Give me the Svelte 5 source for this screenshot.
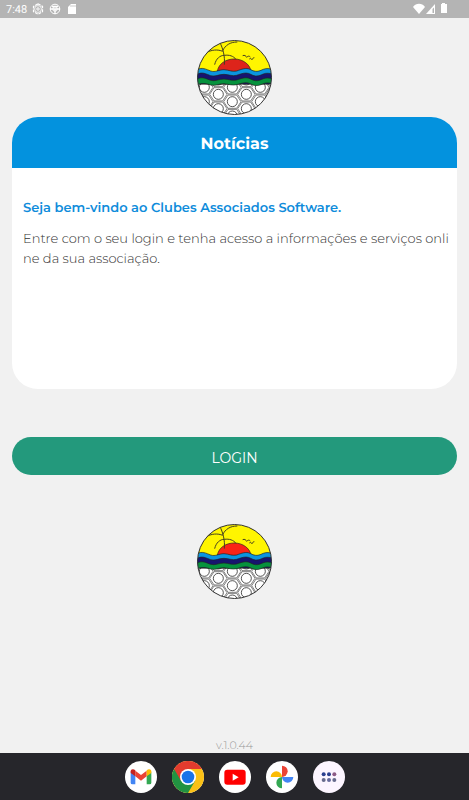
<script>
  const news = {
    title: 'Seja bem-vindo ao Clubes Associados Software.',
    text: 'Entre com o seu login e tenha acesso a informações e serviços online da sua associação.',
  }
  const version = 'v.1.0.44'

  // honeycomb in the lower half of the club logo
  const cells = []
  for (let col = 0; col < 7; col++) {
    for (let row = 0; row < 4; row++) {
      cells.push({ x: 1 + col * 42, y: 117 + row * 43 + (col % 2 ? 0 : 21) })
    }
  }

  const hex = (x, y, rx, ry) =>
    [0, 1, 2, 3, 4, 5]
      .map((i) => {
        const a = (i * Math.PI) / 3
        return `${(x + rx * Math.cos(a)).toFixed(1)},${(y + ry * Math.sin(a)).toFixed(1)}`
      })
      .join(' ')

  const dots = [
    { x: 32, y: 40, color: '#2b3f8f' },
    { x: 48, y: 40, color: '#2b3f8f' },
    { x: 64, y: 40, color: '#8d5a86' },
    { x: 32, y: 57, color: '#666a8c' },
    { x: 48, y: 57, color: '#666a9c' },
    { x: 64, y: 57, color: '#666a8c' },
  ]
</script>

{#snippet logo(id, sun)}
  <svg class="logo" viewBox="21 18 225 225" role="img" aria-label="Clubes Associados">
    <clipPath {id}><circle cx="133.5" cy="130.5" r="111" /></clipPath>
    <g clip-path="url(#{id})" stroke="#222" stroke-width="2">
      <rect x="20" y="17" width="228" height="228" fill="#fff" />
      {#each cells as cell}
        <polygon points={hex(cell.x, cell.y, 26, 23)} fill="#fff" stroke="#444" />
        <circle cx={cell.x} cy={cell.y} r="15" fill="#fff" stroke="#333" stroke-width="2.5" />
      {/each}
      <rect x="20" y="17" width="228" height="100" fill="#fff500" stroke="none" />
      <path d="M82 112C86 88 108 75 133 75S180 90 184 114Z" fill={sun} />
      <g fill="none" stroke="#444022" stroke-width="3">
        <path d="M103 92C105 68 100 45 88 22" />
        <path d="M98 52C84 46 64 46 46 58" />
        <path d="M98 50C106 34 120 24 142 24" />
        <path d="M74 92C78 74 90 64 103 64C118 62 130 66 138 76" />
        <path d="M158 65C164 62 168 66 170 70C174 65 178 66 181 69M178 75C182 72 184 74 186 77C188 73 190 71 193 71" />
      </g>
      <path
        d="M20 108C36 98 48 106 62 111C76 116 86 107 102 107C118 108 126 114 140 111C154 106 168 100 180 106C198 116 206 112 220 106C230 102 238 104 248 106V150H20Z"
        fill="#0b95df"
      />
      <path
        d="M20 122C36 112 48 120 62 125C76 129 86 121 102 121C118 122 126 127 140 124C154 119 168 114 180 120C198 130 206 126 220 120C230 116 238 118 248 120V150H20Z"
        fill="#17146f"
      />
      <path
        d="M20 136C36 126 48 134 62 139C76 143 86 135 102 135C118 136 126 141 140 138C154 133 168 128 180 134C198 144 206 140 220 134C230 130 238 132 248 134V149C238 147 230 145 220 149C206 155 198 158 180 149C168 143 154 148 140 152C126 155 118 151 102 149C86 149 76 157 62 153C48 148 36 146 20 153Z"
        fill="#06923d"
      />
    </g>
    <circle cx="133.5" cy="130.5" r="111" fill="none" stroke="#333" stroke-width="3" />
  </svg>
{/snippet}

<div class="screen">
  <header class="status">
    <span>7:48</span>
    <svg viewBox="0 0 12 12" fill="none" stroke="#fff">
      <path d="M6 .8L10.5 3.4V8.6L6 11.2L1.5 8.6V3.4Z" stroke-width="1.2" stroke-dasharray="3 1" />
      <circle cx="6" cy="6" r="3.4" stroke-width=".8" />
      <circle cx="6" cy="6" r="1.2" />
    </svg>
    <svg viewBox="0 0 12 12" fill="none" stroke="#fff">
      <circle cx="6" cy="6" r="4.8" />
      <path d="M1 6H11M6 6V11M3 3.5H9" stroke-width="1.3" />
      <circle cx="6" cy="6" r="2.2" />
    </svg>
    <svg viewBox="0 0 12 12">
      <path d="M5 1H10V11H2V4Z" fill="#fff" />
      <path d="M5 2V4M7 2V4M9 2V4" stroke="#b4b4b4" stroke-width=".7" />
    </svg>
    <svg class="system" viewBox="0 0 36 12" fill="#fff">
      <path d="M0 4C3-.2 9-.2 12 4L6 11Z" />
      <path d="M22 1V11H13Z" />
      <path d="M19.5 6V10H21V4.5Z" fill="#b4b4b4" />
      <path d="M28 1H29V0H32V1H34V10H28Z" />
    </svg>
  </header>

  <main>
    {@render logo('logo-top', '#dd241b')}

    <section class="card">
      <h1>Notícias</h1>
      <div class="body">
        <h2>{news.title}</h2>
        <p>{news.text}</p>
      </div>
    </section>

    <button class="login" type="button">LOGIN</button>

    {@render logo('logo-bottom', '#fb2416')}

    <p class="version">{version}</p>
  </main>

  <nav class="dock">
    <button type="button" aria-label="Gmail">
      <svg viewBox="0 0 96 96">
        <path d="M17 34V65Q17 70 22 70H31V42Z" fill="#4285f4" />
        <path d="M65 42V70H74Q79 70 79 65V34Z" fill="#34a853" />
        <path d="M31 29L48 42L65 29V46L48 59L31 46Z" fill="#ea4335" />
        <path d="M17 34V31C17 24 25 22 31 28V46L17 36Z" fill="#c5221f" />
        <path d="M79 34V31C79 24 71 22 65 28V46L79 36Z" fill="#fbbc04" />
      </svg>
    </button>
    <button type="button" aria-label="Chrome">
      <svg viewBox="0 0 96 96">
        <circle cx="48" cy="48" r="48" fill="#fbc116" />
        <path d="M48 48L6.4 24A48 48 0 0 0 48 96L69 60Z" fill="#229342" />
        <path d="M6.4 24A48 48 0 0 1 89.6 24H48L27.2 60Z" fill="#e33b2e" />
        <circle cx="48" cy="48" r="24" fill="#fff" />
        <circle cx="48" cy="48" r="19" fill="#1a73e8" />
      </svg>
    </button>
    <button type="button" aria-label="YouTube">
      <svg viewBox="0 0 96 96">
        <rect x="16" y="26" width="64" height="45" rx="9" fill="#f00" />
        <path d="M41 38V59L59 48.500Z" fill="#fff" />
      </svg>
    </button>
    <button type="button" aria-label="Fotos">
      <svg viewBox="0 0 96 96">
        <path d="M48 48V14A17 17 0 0 1 48 48Z" fill="#ea4335" />
        <path d="M48 48H14A17 17 0 0 1 48 48Z" fill="#fbbc04" />
        <path d="M48 48V82A17 17 0 0 1 48 48Z" fill="#34a853" />
        <path d="M48 48H82A17 17 0 0 1 48 48Z" fill="#4285f4" />
      </svg>
    </button>
    <button class="apps" type="button" aria-label="Aplicativos">
      <svg viewBox="0 0 96 96">
        {#each dots as dot}
          <circle cx={dot.x} cy={dot.y} r="6" fill={dot.color} />
        {/each}
      </svg>
    </button>
  </nav>
</div>

<style>
  :global(body) {
    margin: 0;
    background: #f1f1f1;
  }

  .screen {
    display: flex;
    flex-direction: column;
    min-height: 100vh;
    font-family: Montserrat, Inter, sans-serif;
    text-rendering: geometricPrecision;
  }

  .status {
    display: flex;
    align-items: center;
    gap: 5px;
    height: 18px;
    padding: 0 20px 0 6px;
    background: #b4b4b4;
    color: #fff;
    font-family: Roboto, sans-serif;
    font-size: 11px;
  }

  .status svg {
    width: 12px;
    height: 12px;
  }

  .status .system {
    width: 36px;
    margin-left: auto;
  }

  main {
    display: flex;
    flex: 1;
    flex-direction: column;
    align-items: center;
    padding: 22px 12px 0;
  }

  .logo {
    display: block;
    width: 75px;
    height: 75px;
  }

  .card {
    align-self: stretch;
    min-height: 272px;
    margin: 2px 0 48px;
    border-radius: 26px;
    overflow: hidden;
    background: #fff;
  }

  h1 {
    margin: 0;
    padding: 4px 0 0;
    background: #0392de;
    color: #fff;
    font-size: 16px;
    font-weight: 700;
    line-height: 47px;
    text-align: center;
  }

  .body {
    padding: 30px 7px 30px 11px;
  }

  h2 {
    margin: 0 0 11px;
    color: #0f8cdb;
    font-size: 13px;
    font-weight: 600;
    line-height: 20px;
  }

  .body p {
    margin: 0;
    color: #333;
    font-size: 13px;
    font-weight: 300;
    line-height: 20px;
    word-break: break-all;
  }

  .login {
    align-self: stretch;
    height: 38px;
    margin-bottom: 49px;
    padding: 3px 0 0;
    border: 0;
    border-radius: 19px;
    background: #23997c;
    color: #fff;
    font-family: inherit;
    font-size: 14px;
    cursor: pointer;
  }

  .version {
    margin: auto 0 0;
    color: #999;
    font-size: 11px;
    font-weight: 300;
    line-height: 16px;
  }

  .dock {
    display: flex;
    justify-content: center;
    align-items: center;
    gap: 15px;
    height: 47px;
    background: #26262b;
  }

  .dock button {
    width: 32px;
    height: 32px;
    padding: 0;
    border: 0;
    border-radius: 50%;
    background: #fff;
    cursor: pointer;
  }

  .dock .apps {
    background: #fcf5ff;
  }

  .dock svg {
    display: block;
    width: 32px;
    height: 32px;
  }
</style>
